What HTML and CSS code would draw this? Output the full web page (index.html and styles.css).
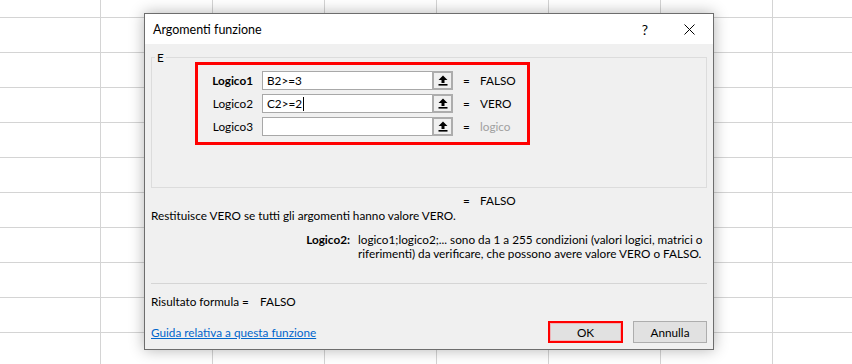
FILE: index.html
```html
<!DOCTYPE html>
<html lang="it">
<head>
  <meta charset="UTF-8" />
  <title>Argomenti funzione</title>
  <link rel="stylesheet" href="styles.css">
</head>
<body>

  <div class="sheet">
    <div class="dialog">
      <div class="titlebar">
        <span class="title">Argomenti funzione</span>
        <span class="help">?</span>
        <span class="close">
          <svg width="11" height="11" viewBox="0 0 11 11"><path d="M0.5 0.5 L10.5 10.5 M10.5 0.5 L0.5 10.5" stroke="#000" stroke-width="1" fill="none"/></svg>
        </span>
      </div>

      <div class="content">
        <div class="group">
          <span class="group-label">E</span>
          <div class="args">
            <div class="arg-row">
              <span class="arg-label bold">Logico1</span>
              <div class="field">
                <span class="field-text">B2&gt;=3</span>
                <span class="field-btn"><svg width="10" height="11" viewBox="0 0 10 11"><path d="M5 0.5 L9.5 5 H6.5 V8 H3.5 V5 H0.5 Z" fill="#000"/><rect x="0.5" y="9" width="9" height="1.6" fill="#000"/></svg></span>
              </div>
              <span class="eq">=</span><span class="val">FALSO</span>
            </div>
            <div class="arg-row">
              <span class="arg-label">Logico2</span>
              <div class="field">
                <span class="field-text">C2&gt;=2<span class="caret"></span></span>
                <span class="field-btn"><svg width="10" height="11" viewBox="0 0 10 11"><path d="M5 0.5 L9.5 5 H6.5 V8 H3.5 V5 H0.5 Z" fill="#000"/><rect x="0.5" y="9" width="9" height="1.6" fill="#000"/></svg></span>
              </div>
              <span class="eq">=</span><span class="val">VERO</span>
            </div>
            <div class="arg-row">
              <span class="arg-label">Logico3</span>
              <div class="field">
                <span class="field-text"></span>
                <span class="field-btn"><svg width="10" height="11" viewBox="0 0 10 11"><path d="M5 0.5 L9.5 5 H6.5 V8 H3.5 V5 H0.5 Z" fill="#000"/><rect x="0.5" y="9" width="9" height="1.6" fill="#000"/></svg></span>
              </div>
              <span class="eq">=</span><span class="val muted">logico</span>
            </div>
          </div>
        </div>

        <div class="result-line"><span class="eq">=</span><span class="val">FALSO</span></div>
        <p class="desc">Restituisce VERO se tutti gli argomenti hanno valore VERO.</p>
        <div class="arg-help">
          <span class="arg-name">Logico2:</span>
          <span class="arg-text">logico1;logico2;... sono da 1 a 255 condizioni (valori logici, matrici o<br>riferimenti) da verificare, che possono avere valore VERO o FALSO.</span>
        </div>

        <hr class="sep">

        <div class="formula"><span class="formula-label">Risultato formula =</span><span>FALSO</span></div>

        <div class="footer">
          <a class="link" href="#">Guida relativa a questa funzione</a>
          <div class="buttons">
            <button class="btn btn-ok">OK</button>
            <button class="btn">Annulla</button>
          </div>
        </div>
      </div>
    </div>
  </div>

</body>
</html>
```

FILE: styles.css
```css
body {
  margin: 0;
  font-family: Lato, "Noto Sans", sans-serif;
  font-size: 11.75px;
  color: #000;
}
.sheet {
  width: 852px;
  height: 364px;
  box-sizing: border-box;
  padding: 13px 0 0 144px;
  overflow: hidden;
  background-color: #fff;
  background-image: linear-gradient(to right, #d4d4d4 1px, transparent 1px),
                    linear-gradient(to bottom, #d4d4d4 1px, transparent 1px);
  background-size: 112px 35px;
  background-position: 100px 17px;
}
.dialog {
  width: 570px;
  box-sizing: border-box;
  border: 1px solid #6d6d6d;
  background: #f0f0f0;
  box-shadow: 0 0 14px rgba(0,0,0,0.3);
}
.titlebar {
  height: 30px;
  background: #fff;
  display: flex;
  align-items: center;
}
.title {
  flex: 1;
  padding-left: 8px;
  font-size: 12.5px;
}
.help {
  width: 20px;
  text-align: center;
  font-size: 14px;
  margin-right: 11px;
}
.close {
  width: 47px;
  display: flex;
  justify-content: center;
}
.content {
  padding: 13px 6px 6px;
}
.group {
  position: relative;
  height: 129px;
  border: 1px solid #dcdcdc;
}
.group-label {
  position: absolute;
  top: -8px;
  left: 3px;
  padding: 0 2px;
  line-height: 16px;
  background: #f0f0f0;
}
.args {
  margin: 4px 0 0 43px;
  width: 335px;
  height: 83px;
  box-sizing: border-box;
  border: 3px solid #ff0000;
  padding-top: 6px;
  display: flex;
  flex-direction: column;
  gap: 4px;
}
.arg-row {
  display: flex;
  align-items: center;
  height: 19px;
}
.arg-label {
  width: 55px;
  margin-right: 9px;
  text-align: right;
}
.bold {
  font-weight: bold;
}
.field {
  display: flex;
  width: 191px;
  height: 19px;
  box-sizing: border-box;
  border: 1px solid #a8a8a8;
  background: #fff;
}
.field-text {
  flex: 1;
  padding-left: 4px;
  line-height: 17px;
}
.caret {
  display: inline-block;
  width: 1px;
  height: 14px;
  margin-left: 1px;
  background: #000;
  vertical-align: -3px;
}
.field-btn {
  width: 21px;
  height: 19px;
  margin: -1px -1px -1px 0;
  box-sizing: border-box;
  border: 2px solid #adadad;
  background: #f0f0f0;
  display: flex;
  align-items: center;
  justify-content: center;
}
.eq {
  display: inline-block;
  width: 17px;
  margin-left: 10px;
}
.muted {
  color: #a0a0a0;
}
.result-line {
  margin-top: 5px;
  padding-left: 302px;
  line-height: 15px;
}
.desc {
  margin: 0;
  line-height: 15px;
}
.arg-help {
  display: flex;
  margin-top: 10px;
  line-height: 14px;
}
.arg-name {
  width: 199px;
  margin-right: 8px;
  flex-shrink: 0;
  text-align: right;
  font-weight: bold;
}
.arg-text {
  white-space: nowrap;
}
.sep {
  margin: 22px 0 0;
  height: 0;
  border: 0;
  border-top: 1px solid #d5d5d5;
}
.formula {
  margin-top: 10px;
  line-height: 15px;
}
.formula-label {
  display: inline-block;
  width: 109px;
  white-space: nowrap;
}
.footer {
  display: flex;
  align-items: center;
  justify-content: space-between;
  margin-top: 12px;
}
.link {
  color: #0066cc;
  text-decoration: underline;
}
.buttons {
  display: flex;
  gap: 10px;
}
.btn {
  width: 74px;
  height: 22px;
  padding: 0;
  box-sizing: border-box;
  border: 1px solid #adadad;
  background: #e1e1e1;
  font: inherit;
  color: #000;
}
.btn-ok {
  width: 75px;
  border: 2px solid #ff0000;
  box-shadow: inset 0 0 0 1px #eeb4b8;
}
```
